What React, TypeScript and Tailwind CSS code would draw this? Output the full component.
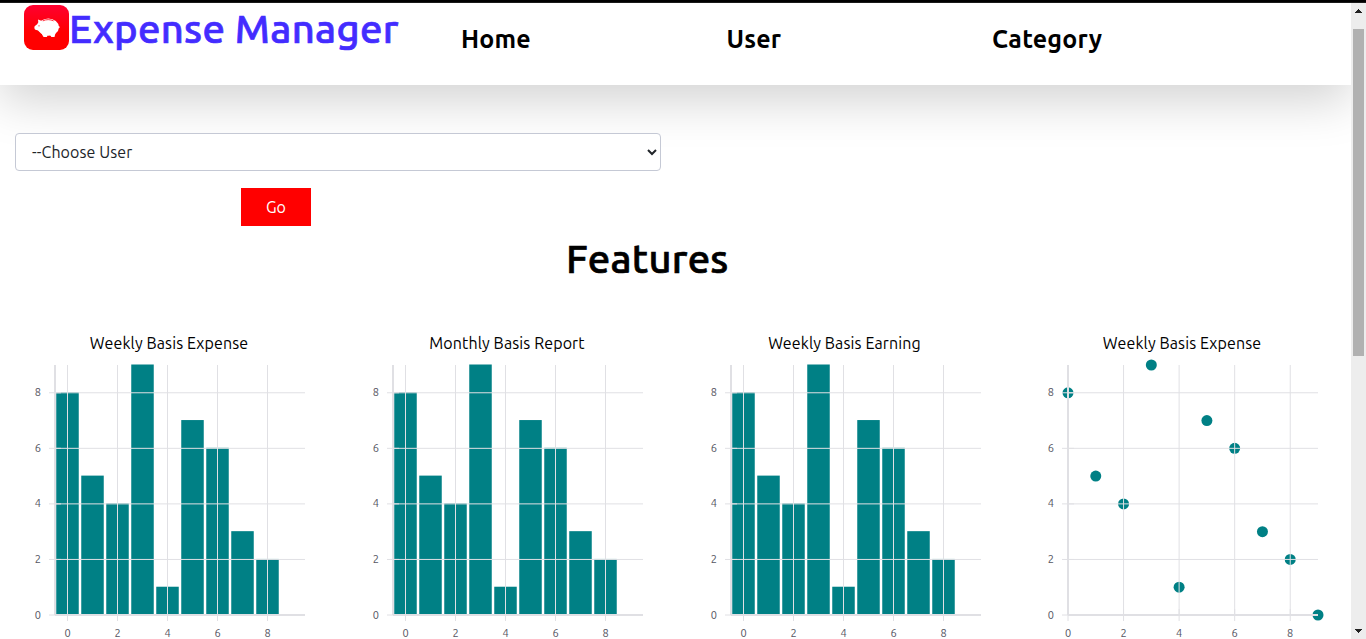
import React from "react";

const FONT = "font-['Ubuntu','Noto_Sans',sans-serif]";
const VALUES = [8, 5, 4, 9, 1, 7, 6, 3, 2, 0];
const TICKS = [0, 2, 4, 6, 8];
const LINE = "#e0e0e4";
const TEAL = "#008085";

const yAt = (v: number) => 10 + 250 - (v * 250) / 9;

function Chart({ kind }: { kind: "bar" | "mark" }) {
  const xAt = (i: number) => (kind === "bar" ? 52.5 + i * 25 : 40 + (i * 250) / 9);
  return (
    <svg width="300" height="300" className="ml-[15px] block overflow-visible">
      {kind === "bar"
        ? VALUES.slice(0, 9).map((v, i) => (
            <rect key={i} x={xAt(i) - 11.25} y={yAt(v) - 0.5} width={22.5} height={260.5 - yAt(v)} fill={TEAL} />
          ))
        : VALUES.map((v, i) => <circle key={i} cx={xAt(i)} cy={yAt(v)} r={5.5} fill={TEAL} />)}
      <g stroke={LINE} strokeWidth={1}>
        {TICKS.map((t) => (
          <React.Fragment key={t}>
            <line x1={xAt(t)} x2={xAt(t)} y1={10} y2={260} />
            <line x1={40} x2={290} y1={yAt(t)} y2={yAt(t)} />
            <line x1={xAt(t)} x2={xAt(t)} y1={254} y2={266} />
            <line x1={34} x2={46} y1={yAt(t)} y2={yAt(t)} />
          </React.Fragment>
        ))}
      </g>
      <g stroke={LINE} strokeWidth={2}>
        <line x1={40} x2={40} y1={10} y2={260} />
        <line x1={40} x2={290} y1={260} y2={260} />
      </g>
      <g fill="#55555f" fontSize={11}>
        {TICKS.map((t) => (
          <React.Fragment key={t}>
            <text x={xAt(t)} y={282} textAnchor="middle">{t}</text>
            <text x={26} y={yAt(t) + 3.5} textAnchor="end">{t}</text>
          </React.Fragment>
        ))}
      </g>
    </svg>
  );
}

const CHARTS: { title: string; kind: "bar" | "mark" }[] = [
  { title: "Weekly Basis Expense", kind: "bar" },
  { title: "Monthly Basis Report", kind: "bar" },
  { title: "Weekly Basis Earning", kind: "bar" },
  { title: "Weekly Basis Expense", kind: "mark" },
];

function Logo() {
  return (
    <svg width="45" height="45" viewBox="0 0 45 45" className="mt-[2px] shrink-0">
      <defs>
        <linearGradient id="logo" x1="0" y1="0" x2="0" y2="1">
          <stop offset="0" stopColor="#ff0030" />
          <stop offset="0.6" stopColor="#ff0000" />
        </linearGradient>
      </defs>
      <rect width="45" height="45" rx="9" fill="url(#logo)" />
      <g fill="#fff">
        <ellipse cx="24.300" cy="22.200" rx="10.600" ry="8.600" />
        <path d="M14 14.400l4.500 1.800-1 11.800-3.400-2.400-2.600-.9c-.7-.3-1.100-1.200-1.100-2.300 0-1 .4-1.500 1.100-2l1.700-1.200 1.100-1.900z" />
        <path d="M18 28h5.500v2.700l-.7 1.300h-3.200l-1.600-2.500zM26 28h5.500l-1 4h-3.100l-1.400-2z" />
        <path d="M34 20.800c1.200 0 1.800.7 1.600 2l-1.400.8z" />
      </g>
      <path d="M18.800 15.900c3.300-1.700 7.500-1.700 10.800 0" stroke="#ff0010" strokeWidth="0.800" fill="none" />
      <circle cx="15" cy="20.800" r="0.600" fill="#ff0010" />
    </svg>
  );
}

export default function App() {
  return (
    <div className={`flex h-[639px] w-[1366px] flex-col overflow-hidden bg-white text-black ${FONT}`}>
      <div className="h-[3px] shrink-0 border-b border-[#1a1a1a] bg-black" />
      <div className="flex min-h-0 flex-1">
        <main className="w-[1351px] shrink-0 overflow-hidden">
          <header className="flex h-[82px] items-start bg-white pl-6 shadow-[0_16px_48px_rgba(0,0,0,0.175)]">
            <div className="flex w-[437px] shrink-0">
              <Logo />
              <span className="whitespace-nowrap text-[40px] leading-[52px] font-medium tracking-[0.3px] text-[#432cff] [-webkit-text-stroke:0.7px_#432cff]">Expense Manager</span>
            </div>
            <nav className="grid grid-cols-[265.500px_265.500px_265px] pt-[18px] text-[25px] leading-9 font-bold tracking-[0.2px]">
              <a>Home</a>
              <a>User</a>
              <a>Category</a>
            </nav>
          </header>
          <div className="relative ml-[15px] mt-12 flex h-[38px] w-[646px] items-center justify-between rounded border border-[#c5c9d5] bg-white pl-4 pr-[3px] text-[#212529]">
            <span className="text-base tracking-[0.1px]">--Choose User</span>
            <svg width="10" height="8" viewBox="0 0 10 8" fill="none" stroke="#212529" strokeWidth="2">
              <path d="M1 2l4 4 4-4" />
            </svg>
          </div>
          <button className="ml-[241px] mt-[17px] block h-[38px] w-[70px] bg-[#ff0000] text-base text-white">Go</button>
          <h1 className="ml-[566px] mt-[9px] text-[40px] leading-[48px] font-medium tracking-[0.25px] [-webkit-text-stroke:0.7px_#000]">Features</h1>
          <section className="mt-[48px] grid grid-cols-[338px_338px_337px_338px]">
            {CHARTS.map((c, i) => (
              <div key={i}>
                <h2 className="h-6 text-center text-base leading-6 tracking-[0.12px]">{c.title}</h2>
                <Chart kind={c.kind} />
              </div>
            ))}
          </section>
        </main>
        <aside className="flex w-[15px] shrink-0 flex-col items-center justify-between bg-[#ededed]">
          <svg width="7" height="4" className="mt-[6px]" shapeRendering="crispEdges"><path d="M0 4l3.500-4 3.500 4z" fill="#222" /></svg>
          <div className="mt-4 h-[327px] w-[11px] bg-[#b1b1b1]" />
          <div className="flex-1" />
          <svg width="7" height="4" className="mb-[6px]" shapeRendering="crispEdges"><path d="M0 0h7l-3.500 4z" fill="#222" /></svg>
        </aside>
      </div>
    </div>
  );
}
